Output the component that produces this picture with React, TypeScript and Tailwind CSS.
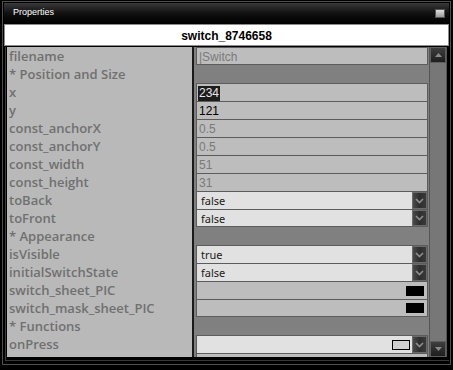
import React from "react";

type Row = {
  label: string;
  kind: "text" | "header" | "select" | "pic" | "func";
  value?: string;
  tone?: "dim" | "dark" | "sel";
};

const rows: Row[] = [
  { label: "filename", kind: "text", value: "|Switch", tone: "dim" },
  { label: "* Position and Size", kind: "header" },
  { label: "x", kind: "text", value: "234", tone: "sel" },
  { label: "y", kind: "text", value: "121", tone: "dark" },
  { label: "const_anchorX", kind: "text", value: "0.5", tone: "dim" },
  { label: "const_anchorY", kind: "text", value: "0.5", tone: "dim" },
  { label: "const_width", kind: "text", value: "51", tone: "dim" },
  { label: "const_height", kind: "text", value: "31", tone: "dim" },
  { label: "toBack", kind: "select", value: "false" },
  { label: "toFront", kind: "select", value: "false" },
  { label: "* Appearance", kind: "header" },
  { label: "isVisible", kind: "select", value: "true" },
  { label: "initialSwitchState", kind: "select", value: "false" },
  { label: "switch_sheet_PIC", kind: "pic" },
  { label: "switch_mask_sheet_PIC", kind: "pic" },
  { label: "* Functions", kind: "header" },
  { label: "onPress", kind: "func" },
  { label: "", kind: "text", value: "" },
];

function Arrow() {
  return (
    <div className="w-[15px] h-full border border-[#6a6a6a] bg-linear-to-r from-[#4a4a4a] via-[#2e2e2e] to-[#3a3a3a] flex items-center justify-center">
      <svg width="9" height="6" viewBox="0 0 9 6">
        <path d="M1 1 L4.5 4.5 L8 1" stroke="#8e8e8e" strokeWidth="1.6" fill="none" />
      </svg>
    </div>
  );
}

function Cell({ row, next }: { row: Row; next?: Row }) {
  const bottom = !next || next.kind === "header";
  const base = `h-full w-[232px] border-x border-t border-[#5c5c5c] ${bottom ? "border-b" : ""}`;
  if (row.kind === "header") return <div className="h-full w-[232px]" />;
  if (row.kind === "select" || row.kind === "func") {
    return (
      <div className={`${base} bg-[#e1e1e1] flex items-stretch`}>
        <div className="flex-1 flex items-center pl-[4px] pt-[2px] text-[11px] text-[#1a1a1a] font-['Noto_Sans',sans-serif]">
          {row.value}
        </div>
        {row.kind === "func" && (
          <div className="flex items-center pr-[2px]">
            <div className="w-[18px] h-[10px] border border-black bg-[#d0d0d0]" />
          </div>
        )}
        <Arrow />
      </div>
    );
  }
  if (row.kind === "pic") {
    return (
      <div className={`${base} bg-[#bdbdbd] flex items-center justify-end pr-[3px]`}>
        <div className="w-[18px] h-[10px] bg-black" />
      </div>
    );
  }
  const color =
    row.tone === "dark" ? "text-black" : row.tone === "sel" ? "text-[#e8e8e8]" : "text-[#7a7a7a]";
  return (
    <div className={`${base} bg-[#bdbdbd] flex items-center pl-[1px] pt-[1px] text-[12px] font-['Liberation_Sans',sans-serif]`}>
      {row.tone === "sel" ? (
        <span className={`bg-[#1c1c1c] ${color} px-[1px] leading-[15px]`}>{row.value}</span>
      ) : (
        <span className={`${color} pl-[1px]`}>{row.value}</span>
      )}
    </div>
  );
}

function ScrollBtn({ up }: { up: boolean }) {
  return (
    <div className="h-[16px] w-full border border-[#5e5e5e] bg-linear-to-b from-[#3e3e3e] to-[#1e1e1e] flex items-center justify-center">
      <svg width="7" height="4" viewBox="0 0 7 4">
        {up ? <path d="M0 4 L3.5 0 L7 4 Z" fill="#8a8a8a" /> : <path d="M0 0 L3.5 4 L7 0 Z" fill="#8a8a8a" />}
      </svg>
    </div>
  );
}

export default function App() {
  return (
    <div className="w-[453px] h-[370px] bg-black pt-[1px] pl-[2px]">
      <div className="w-[449px] h-[364px] border border-[#4e4e4e] p-[1px] flex flex-col">
        {/* title */}
        <div className="h-[20px] bg-linear-to-b from-[#3a3a3a] via-[#121212] to-[#020202] flex items-center justify-between pl-[9px] pr-[4px]">
          <span className="text-white text-[9px] font-['Liberation_Sans',sans-serif]">Properties</span>
          <div className="w-[10px] h-[9px] border border-[#555] bg-linear-to-b from-[#e0e0e0] to-[#9a9a9a]" />
        </div>
        {/* header */}
        <div className="mt-[1px] h-[22px] border border-[#8c8c8c] bg-white flex items-center justify-center pt-[1px] text-[12px] font-bold text-black font-['Liberation_Sans',sans-serif]">
          switch_8746658
        </div>
        {/* body */}
        <div className="mt-[1px] ml-[1px] h-[314px] border-l border-b border-[#3a3a3a] pl-[1px] pb-[3px] flex">
          <div className="h-[310px] overflow-hidden flex flex-col">
            {rows.map((r, i) => (
              <div key={i} className="flex h-[18px] shrink-0">
                <div className="w-[185px] bg-[#b9b9b9] pl-[2px] pt-[2px] flex items-center text-[13px] font-semibold text-[#707070] font-['Open_Sans',sans-serif] whitespace-nowrap">
                  {r.label}
                </div>
                <div className="w-[2px] bg-[#1a1a1a]" />
                <div className="w-[235px] bg-[#808080] pl-[2px] pr-[1px]">
                  <Cell row={r} next={rows[i + 1]} />
                </div>
              </div>
            ))}
          </div>
          <div className="w-[18px] h-[310px] flex flex-col bg-[#777777] border-x border-[#555]">
            <ScrollBtn up />
            <div className="flex-1" />
            <ScrollBtn up={false} />
          </div>
        </div>
      </div>
    </div>
  );
}
